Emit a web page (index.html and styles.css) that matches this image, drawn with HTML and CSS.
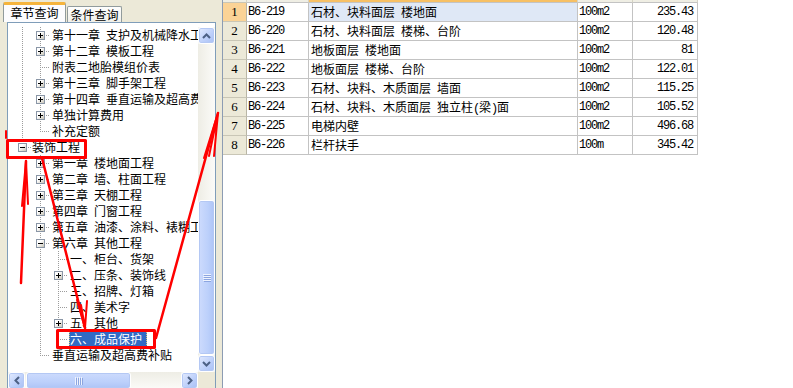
FILE: index.html
```html
<!DOCTYPE html>
<html lang="zh-CN">
<head>
  <meta charset="UTF-8">
  <title>章节查询</title>
  <link rel="stylesheet" href="styles.css">
</head>
<body>

  <div class="app">
    <!-- 左侧：章节树 -->
    <div class="side">
      <div class="tabs">
        <div class="tab active">章节查询</div>
        <div class="tab">条件查询</div>
      </div>

      <div class="pane">
        <div class="tree-wrap">
          <div class="tree">
            <div class="node"><span class="c v"></span><span class="c t"><i class="box plus"></i></span><span class="label">第十一章&ensp;支护及机械降水工程</span></div>
            <div class="node"><span class="c v"></span><span class="c t"><i class="box plus"></i></span><span class="label">第十二章&ensp;模板工程</span></div>
            <div class="node"><span class="c v"></span><span class="c t"></span><span class="label">附表二地胎模组价表</span></div>
            <div class="node"><span class="c v"></span><span class="c t"><i class="box plus"></i></span><span class="label">第十三章&ensp;脚手架工程</span></div>
            <div class="node"><span class="c v"></span><span class="c t"><i class="box plus"></i></span><span class="label">第十四章&ensp;垂直运输及超高费</span></div>
            <div class="node"><span class="c v"></span><span class="c t"><i class="box plus"></i></span><span class="label">单独计算费用</span></div>
            <div class="node"><span class="c v"></span><span class="c e"></span><span class="label">补充定额</span></div>
            <div class="node"><span class="c e"><i class="box"></i></span><span class="label root">装饰工程</span></div>
            <div class="node"><span class="c"></span><span class="c t"><i class="box plus"></i></span><span class="label">第一章&ensp;楼地面工程</span></div>
            <div class="node"><span class="c"></span><span class="c t"><i class="box plus"></i></span><span class="label">第二章&ensp;墙、柱面工程</span></div>
            <div class="node"><span class="c"></span><span class="c t"><i class="box plus"></i></span><span class="label">第三章&ensp;天棚工程</span></div>
            <div class="node"><span class="c"></span><span class="c t"><i class="box plus"></i></span><span class="label">第四章&ensp;门窗工程</span></div>
            <div class="node"><span class="c"></span><span class="c t"><i class="box plus"></i></span><span class="label">第五章&ensp;油漆、涂料、裱糊工程</span></div>
            <div class="node"><span class="c"></span><span class="c t"><i class="box"></i></span><span class="label">第六章&ensp;其他工程</span></div>
            <div class="node"><span class="c"></span><span class="c v"></span><span class="c t"></span><span class="label">一、柜台、货架</span></div>
            <div class="node"><span class="c"></span><span class="c v"></span><span class="c t"><i class="box plus"></i></span><span class="label">二、压条、装饰线</span></div>
            <div class="node"><span class="c"></span><span class="c v"></span><span class="c t"></span><span class="label">三、招牌、灯箱</span></div>
            <div class="node"><span class="c"></span><span class="c v"></span><span class="c t"></span><span class="label">四、美术字</span></div>
            <div class="node"><span class="c"></span><span class="c v"></span><span class="c t"><i class="box plus"></i></span><span class="label">五、其他</span></div>
            <div class="node"><span class="c"></span><span class="c v"></span><span class="c e"></span><span class="label sel">六、成品保护</span></div>
            <div class="node"><span class="c"></span><span class="c e"></span><span class="label">垂直运输及超高费补贴</span></div>
          </div>

          <div class="vscroll">
            <div class="sb-btn">
              <svg width="9" height="6" viewBox="0 0 9 6"><path d="M1 5 L4.5 1.5 L8 5" fill="none" stroke="#4d6185" stroke-width="2"/></svg>
            </div>
            <div class="vtrack">
              <div class="thumb v-thumb">
                <svg width="8" height="8" viewBox="0 0 8 8"><path d="M0 .5h8M0 2.5h8M0 4.5h8M0 6.5h8" stroke="#eef3fe" stroke-width="1"/><path d="M1 1.5h7M1 3.5h7M1 5.5h7M1 7.5h7" stroke="#8ca5e0" stroke-width="1"/></svg>
              </div>
            </div>
            <div class="sb-btn">
              <svg width="9" height="6" viewBox="0 0 9 6"><path d="M1 1 L4.5 4.5 L8 1" fill="none" stroke="#4d6185" stroke-width="2"/></svg>
            </div>
          </div>
        </div>

        <div class="hscroll">
          <div class="sb-btn">
            <svg width="6" height="9" viewBox="0 0 6 9"><path d="M5 1 L1.5 4.5 L5 8" fill="none" stroke="#4d6185" stroke-width="2"/></svg>
          </div>
          <div class="htrack">
            <div class="thumb h-thumb">
              <svg width="8" height="8" viewBox="0 0 8 8"><path d="M.5 0v8M2.5 0v8M4.5 0v8M6.5 0v8" stroke="#eef3fe" stroke-width="1"/><path d="M1.5 1v7M3.5 1v7M5.5 1v7M7.5 1v7" stroke="#8ca5e0" stroke-width="1"/></svg>
            </div>
          </div>
          <div class="sb-btn">
            <svg width="6" height="9" viewBox="0 0 6 9"><path d="M1 1 L4.5 4.5 L1 8" fill="none" stroke="#4d6185" stroke-width="2"/></svg>
          </div>
          <div class="corner"></div>
        </div>
      </div>
    </div>

    <div class="split"></div>

    <!-- 右侧：定额列表 -->
    <div class="grid">
      <div class="g-row head">
        <div class="cell num"></div>
        <div class="cell"></div>
        <div class="cell name"></div>
        <div class="cell"></div>
        <div class="cell"></div>
      </div>
      <div class="g-row current">
        <div class="cell num">1</div>
        <div class="cell code">B6-219</div>
        <div class="cell name">石材、块料面层&ensp;楼地面</div>
        <div class="cell code">100m2</div>
        <div class="cell val">235.43</div>
      </div>
      <div class="g-row">
        <div class="cell num">2</div>
        <div class="cell code">B6-220</div>
        <div class="cell name">石材、块料面层&ensp;楼梯、台阶</div>
        <div class="cell code">100m2</div>
        <div class="cell val">120.48</div>
      </div>
      <div class="g-row">
        <div class="cell num">3</div>
        <div class="cell code">B6-221</div>
        <div class="cell name">地板面层&ensp;楼地面</div>
        <div class="cell code">100m2</div>
        <div class="cell val">81</div>
      </div>
      <div class="g-row">
        <div class="cell num">4</div>
        <div class="cell code">B6-222</div>
        <div class="cell name">地板面层&ensp;楼梯、台阶</div>
        <div class="cell code">100m2</div>
        <div class="cell val">122.01</div>
      </div>
      <div class="g-row">
        <div class="cell num">5</div>
        <div class="cell code">B6-223</div>
        <div class="cell name">石材、块料、木质面层&ensp;墙面</div>
        <div class="cell code">100m2</div>
        <div class="cell val">115.25</div>
      </div>
      <div class="g-row">
        <div class="cell num">6</div>
        <div class="cell code">B6-224</div>
        <div class="cell name">石材、块料、木质面层&ensp;独立柱<span class="half">(</span>梁<span class="half">)</span>面</div>
        <div class="cell code">100m2</div>
        <div class="cell val">105.52</div>
      </div>
      <div class="g-row">
        <div class="cell num">7</div>
        <div class="cell code">B6-225</div>
        <div class="cell name">电梯内壁</div>
        <div class="cell code">100m2</div>
        <div class="cell val">496.68</div>
      </div>
      <div class="g-row">
        <div class="cell num">8</div>
        <div class="cell code">B6-226</div>
        <div class="cell name">栏杆扶手</div>
        <div class="cell code">100m</div>
        <div class="cell val">345.42</div>
      </div>
    </div>
  </div>

  <!-- 红色标注 -->
  <svg class="marks" width="793" height="388" viewBox="0 0 793 388">
    <g fill="none" stroke="#ff0000" stroke-linecap="round" stroke-linejoin="round">
      <path d="M6 131 V138" stroke-width="2"/>
      <rect x="7.5" y="140.5" width="78" height="17" stroke-width="3" stroke-linecap="butt"/>
      <rect x="57.5" y="330.5" width="97" height="17" stroke-width="3" stroke-linecap="butt"/>
      <path d="M21 283 L26 161" stroke-width="2.5"/>
      <path d="M22 206 L26 161 L28 204 M24 190 L26 161" stroke-width="2"/>
      <path d="M42 158 L85 328" stroke-width="2.5"/>
      <path d="M77 300 L85 328 L87 301 M81 305 L85 328" stroke-width="2"/>
      <path d="M156 338 L218 113" stroke-width="2.5"/>
      <path d="M204 158 L218 113 L214 156 M209 156 L218 113" stroke-width="2"/>
    </g>
  </svg>

</body>
</html>
```

FILE: styles.css
```css
body {
  margin: 0;
  width: 793px;
  height: 388px;
  overflow: hidden;
  position: relative;
  background: #fff;
  font-family: "Noto Sans CJK SC", sans-serif;
  font-size: 12px;
  color: #000;
}

.app {
  display: flex;
  height: 388px;
}

/* 左侧面板 */
.side {
  width: 216px;
  flex: none;
  background: #ece9d8;
}
.tabs {
  height: 22px;
  display: flex;
  align-items: flex-end;
  padding-left: 3px;
}
.tab {
  box-sizing: border-box;
  border: 1px solid #919b9c;
  border-bottom: none;
  border-radius: 2px 2px 0 0;
  background: linear-gradient(#fefefe, #f0efe8);
  text-align: center;
}
.tab.active {
  width: 63px;
  height: 20px;
  line-height: 16px;
  border-top: 3px solid #f5b43c;
  background: #fcfcfe;
}
.tab + .tab {
  width: 55px;
  height: 16px;
  line-height: 15px;
  margin-left: 1px;
}

.pane {
  box-sizing: border-box;
  width: 209px;
  height: 366px;
  margin-left: 7px;
  padding-top: 4px;
  border: 1px solid #7f9db9;
  border-bottom: none;
  background: #fff;
}
.tree-wrap {
  display: flex;
  height: 345px;
}
.tree {
  width: 190px;
  flex: none;
  overflow: hidden;
  padding-left: 5px;
  box-sizing: border-box;
}
.node {
  display: flex;
  height: 16px;
  line-height: 16px;
  white-space: nowrap;
}
.c {
  width: 18px;
  height: 16px;
  flex: none;
  display: flex;
  align-items: flex-start;
}
.v {
  background: repeating-linear-gradient(#9c9c9c 0 1px, transparent 1px 2px) 9px 0 / 1px 16px no-repeat;
}
.t {
  background:
    repeating-linear-gradient(#9c9c9c 0 1px, transparent 1px 2px) 9px 0 / 1px 16px no-repeat,
    repeating-linear-gradient(to right, #9c9c9c 0 1px, transparent 1px 2px) 11px 8px / 8px 1px no-repeat;
}
.e {
  background:
    repeating-linear-gradient(#9c9c9c 0 1px, transparent 1px 2px) 9px 0 / 1px 9px no-repeat,
    repeating-linear-gradient(to right, #9c9c9c 0 1px, transparent 1px 2px) 11px 8px / 8px 1px no-repeat;
}
.box {
  display: block;
  width: 9px;
  height: 9px;
  margin: 4px 0 0 5px;
  box-sizing: border-box;
  border: 1px solid #8a96a6;
  background:
    linear-gradient(#000, #000) center / 5px 1px no-repeat,
    linear-gradient(135deg, #fff 35%, #c8c4b6);
}
.box.plus {
  background:
    linear-gradient(#000, #000) center / 5px 1px no-repeat,
    linear-gradient(#000, #000) center / 1px 5px no-repeat,
    linear-gradient(135deg, #fff 35%, #c8c4b6);
}
.label {
  margin-left: 2px;
  padding: 0 1px;
}
.label.root {
  margin-left: 0;
}
.label.sel {
  background: #316ac5;
  color: #fff;
  outline: 1px dotted #d6c47a;
  outline-offset: -1px;
  padding: 0 5px 0 1px;
}

/* 滚动条 */
.vscroll {
  width: 17px;
  flex: none;
  display: flex;
  flex-direction: column;
  background: #f6f5f0;
}
.sb-btn {
  width: 17px;
  height: 17px;
  flex: none;
  box-sizing: border-box;
  border: 1px solid #fff;
  border-radius: 3px;
  background: linear-gradient(135deg, #e3ebfe, #bccffa 60%, #a9c0f4);
  box-shadow: inset 0 0 0 1px #b4c8f4;
  display: flex;
  align-items: center;
  justify-content: center;
}
.vtrack {
  flex: 1;
  display: flex;
  flex-direction: column;
  justify-content: flex-end;
  background: linear-gradient(to right, #eeede5, #fbfbf8);
}
.thumb {
  box-sizing: border-box;
  border: 1px solid #fff;
  border-radius: 3px;
  box-shadow: inset 0 0 0 1px #b4c8f4;
  display: flex;
  align-items: center;
  justify-content: center;
}
.v-thumb {
  height: 155px;
  background: linear-gradient(to right, #cddbfd, #bcd0fb 60%, #aec4f6);
}
.hscroll {
  display: flex;
  height: 17px;
  background: #f6f5f0;
}
.htrack {
  width: 156px;
  flex: none;
  padding-left: 1px;
  box-sizing: border-box;
  background: linear-gradient(#eeede5, #fbfbf8);
}
.h-thumb {
  width: 105px;
  height: 17px;
  background: linear-gradient(#cddbfd, #bcd0fb 60%, #aec4f6);
}
.corner {
  width: 17px;
  background: #ece9d8;
}

.split {
  width: 6px;
  flex: none;
  background: #ece9d8;
  border-right: 1px solid #8c9cb3;
}

/* 右侧表格 */
.grid {
  flex: 1;
  background: #fff;
}
.g-row {
  display: grid;
  grid-template-columns: 24px 62px 269px 55px 65px;
}
.cell {
  box-sizing: border-box;
  height: 19px;
  line-height: 18px;
  border-right: 1px solid #c3c3c3;
  border-bottom: 1px solid #c3c3c3;
  white-space: nowrap;
  overflow: hidden;
}
.head .cell {
  height: 3px;
  background: #efeee4;
  border-right-color: #d6d3c4;
}
.head .name {
  background: #f7c064;
}
.num {
  background: #ece9d8;
  text-align: center;
  border-right-color: #b9b6a6;
  border-bottom-color: #c9c6b6;
  font-family: "Liberation Serif", serif;
  font-size: 13px;
}
.current .num {
  background: #fbd396;
}
.current .name {
  background: #dfe8f6;
}
.code, .val {
  font-family: "Liberation Mono", "DejaVu Sans Mono", monospace;
  font-size: 12px;
  letter-spacing: -1.2px;
  padding-left: 1px;
}
.val {
  text-align: right;
  padding-right: 4px;
}
.name {
  padding-left: 2px;
}
.half {
  font-family: "Liberation Mono", monospace;
  font-size: 12px;
  letter-spacing: -1.2px;
}

/* 红色标注层 */
.marks {
  position: absolute;
  top: 0;
  left: 0;
  pointer-events: none;
}
```
